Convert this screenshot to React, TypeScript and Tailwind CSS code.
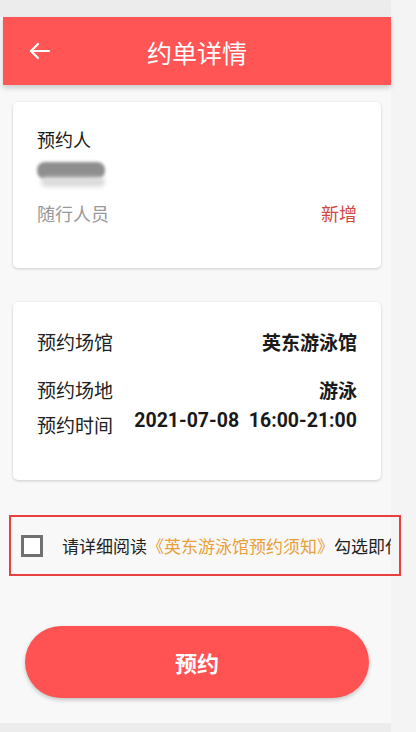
import React, { useState } from 'react';

const font = { fontFamily: '"Noto Sans CJK SC", Roboto, "Noto Sans", sans-serif' };

interface InfoRow {
  label: string;
  value: string;
}

const rows: InfoRow[] = [
  { label: '预约场馆', value: '英东游泳馆' },
  { label: '预约场地', value: '游泳' },
  { label: '预约时间', value: '2021-07-08  16:00-21:00' },
];

export default function App() {
  const [agreed, setAgreed] = useState(false);

  return (
    <div className="flex w-[416px] h-[732px] overflow-hidden bg-[#f4f4f4]" style={font}>
      {/* phone screen */}
      <div className="relative flex h-full w-[391px] flex-col bg-[#f8f8f8]">
        <div className="h-[17px] bg-[#ececec]" />

        {/* header */}
        <header className="relative ml-[3px] flex h-[68px] items-center justify-center bg-[#ff5555] shadow-[0_3px_5px_rgba(0,0,0,0.18)]">
          <button className="absolute left-[25px] top-[24px] text-white">
            <svg width="24" height="20" viewBox="0 0 24 20" fill="none" stroke="white" strokeWidth="2.2" strokeLinecap="round" strokeLinejoin="round">
              <path d="M21 10H3" />
              <path d="M10 3L3 10l7 7" />
            </svg>
          </button>
          <h1 className="pt-[2px] text-[25px] leading-none text-white">约单详情</h1>
        </header>

        {/* card: person */}
        <div className="ml-[13px] mt-[17px] h-[166px] w-[368px] rounded-[5px] bg-white px-[24px] pt-[24px] shadow-[0_1px_3px_rgba(0,0,0,0.18)]">
          <div className="text-[18px] leading-[26px] text-[#1a1a1a]">预约人</div>
          <div className="relative mt-[9px] h-[26px] w-[72px]">
            <div className="absolute left-[0px] top-[1px] h-[17px] w-[68px] rounded-[8px] bg-[#8e8e8e] blur-[1.5px]" />
            <div className="absolute left-[4px] top-[16px] h-[10px] w-[64px] rounded-[6px] bg-[#dcdcdc] blur-[2px]" />
          </div>
          <div className="mt-[13px] flex items-center justify-between text-[18px] leading-[26px]">
            <span className="text-[#999999]">随行人员</span>
            <span className="text-[#d4473f]">新增</span>
          </div>
        </div>

        {/* card: venue info */}
        <div className="ml-[13px] mt-[34px] h-[178px] w-[368px] rounded-[5px] bg-white px-[24px] pt-[27px] shadow-[0_1px_3px_rgba(0,0,0,0.18)]">
          {rows.map((r, i) => (
            <div
              key={r.label}
              className={`flex justify-between text-[19px] leading-[26px] ${i === 1 ? 'mt-[22px]' : ''} ${i === 2 ? 'mt-[5px]' : ''}`}
            >
              <span className={`text-[#222222] ${i === 2 ? 'pt-[4px]' : ''}`}>{r.label}</span>
              <span
                className={`whitespace-pre font-bold text-[#1a1a1a] ${i === 2 ? 'text-[19.5px]' : ''}`}
                style={i === 2 ? { fontFamily: 'Roboto, "Noto Sans CJK SC", sans-serif' } : undefined}
              >
                {r.value}
              </span>
            </div>
          ))}
        </div>

        {/* agreement */}
        <div className="relative mt-[35px] h-[61px]">
          <label className="flex h-full items-center overflow-hidden whitespace-nowrap pl-[21px] text-[17px]">
            <span
              onClick={() => setAgreed(!agreed)}
              className={`mr-[19px] h-[22px] w-[22px] shrink-0 border-[3px] border-[#707070] ${agreed ? 'bg-[#ff5555]' : 'bg-white'}`}
            />
            <span className="text-[#222222]">请详细阅读</span>
            <span className="text-[#e9a03a]">《英东游泳馆预约须知》</span>
            <span className="text-[#222222]">勾选即代表同意</span>
          </label>
          <div className="pointer-events-none absolute left-[9px] top-0 h-[61px] w-[392px] border-[2px] border-[#e8403f]" />
        </div>

        {/* submit */}
        <button className="ml-[25px] mt-[50px] h-[72px] w-[344px] rounded-full bg-[#ff5252] text-[22px] font-bold text-white shadow-[0_2px_4px_rgba(0,0,0,0.22)]">
          预约
        </button>

        <div className="flex-1" />
        <div className="h-[9px] bg-[#ececec]" />
      </div>
      <div className="flex-1" />
    </div>
  );
}
